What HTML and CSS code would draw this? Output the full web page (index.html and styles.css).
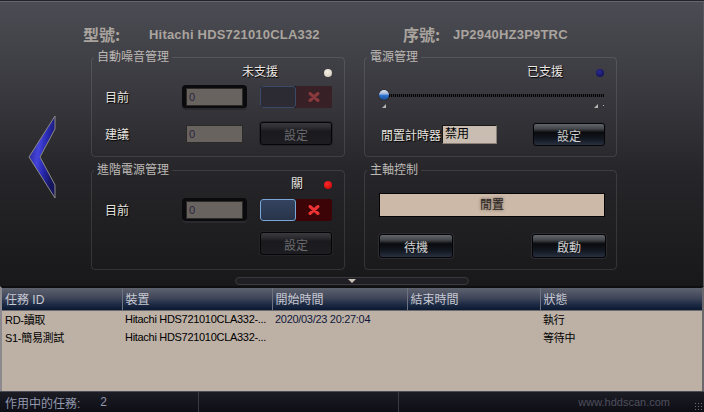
FILE: index.html
```html
<!DOCTYPE html>
<html lang="zh-Hant">
<head>
    <meta charset="UTF-8">
    <title>HDDScan</title>
    <link rel="stylesheet" href="styles.css">
</head>
<body>
    <div class="panel">
        <div class="info">
            <span class="info-label">型號:</span>
            <span class="info-value">Hitachi HDS721010CLA332</span>
            <span class="info-label serial">序號:</span>
            <span class="info-value">JP2940HZ3P9TRC</span>
        </div>

        <div class="panel-body">
            <div class="nav">
                <svg width="30" height="84" viewBox="-1 -1 30 84">
                    <defs>
                        <linearGradient id="chev" x1="0" y1="0" x2="1" y2="0.4">
                            <stop offset="0" stop-color="#1c1c7a"/>
                            <stop offset="0.45" stop-color="#4444dc"/>
                            <stop offset="0.7" stop-color="#2828b0"/>
                            <stop offset="1" stop-color="#16165e"/>
                        </linearGradient>
                    </defs>
                    <polygon points="27,0 1,41 27,82 27,69 12,41 27,13" fill="url(#chev)" stroke="#8c8a86" stroke-width="1"/>
                </svg>
            </div>

            <div class="groups">
                <!-- 自動噪音管理 -->
                <fieldset class="group">
                    <legend>自動噪音管理</legend>
                    <div class="status">
                        <span class="state aam">未支援</span>
                        <span class="dot dot-beige"></span>
                    </div>
                    <div class="row first">
                        <span class="row-label">目前</span>
                        <div class="field"><div class="field-input">0</div></div>
                        <div class="toggle">
                            <div class="toggle-off"></div>
                            <div class="toggle-x">
                                <svg width="12" height="10" viewBox="0 0 12 10"><path d="M2 1.5 L10 8.5 M10 1.5 L2 8.5" stroke="#8a3a3c" stroke-width="3" stroke-linecap="round"/></svg>
                            </div>
                        </div>
                    </div>
                    <div class="row second">
                        <span class="row-label">建議</span>
                        <div class="field plain"><div class="field-input">0</div></div>
                        <button class="btn btn-disabled toggle-gap">設定</button>
                    </div>
                </fieldset>

                <!-- 電源管理 -->
                <fieldset class="group">
                    <legend>電源管理</legend>
                    <div class="status">
                        <span class="state power">已支援</span>
                        <span class="dot dot-navy"></span>
                    </div>
                    <div class="slider">
                        <div class="slider-track"></div>
                        <div class="slider-thumb"></div>
                    </div>
                    <div class="ticks">
                        <span class="tick"></span>
                        <span class="tick-end"><span class="tick"></span><span class="tick-dot"></span></span>
                    </div>
                    <div class="timer-row">
                        <span class="timer-label">閒置計時器</span>
                        <div class="timer-input">禁用</div>
                        <button class="btn timer-btn">設定</button>
                    </div>
                </fieldset>

                <!-- 進階電源管理 -->
                <fieldset class="group">
                    <legend>進階電源管理</legend>
                    <div class="status apm-status">
                        <span class="state apm">關</span>
                        <span class="dot dot-red"></span>
                    </div>
                    <div class="row apm-row">
                        <span class="row-label">目前</span>
                        <div class="field"><div class="field-input">0</div></div>
                        <div class="toggle active">
                            <div class="toggle-off"></div>
                            <div class="toggle-x">
                                <svg width="12" height="10" viewBox="0 0 12 10"><path d="M2 1.5 L10 8.5 M10 1.5 L2 8.5" stroke="#ec3434" stroke-width="3" stroke-linecap="round"/></svg>
                            </div>
                        </div>
                    </div>
                    <div class="apm-set">
                        <button class="btn btn-disabled">設定</button>
                    </div>
                </fieldset>

                <!-- 主軸控制 -->
                <fieldset class="group">
                    <legend>主軸控制</legend>
                    <div class="spindle-state">閒置</div>
                    <div class="spindle-buttons">
                        <button class="btn wide">待機</button>
                        <button class="btn wide">啟動</button>
                    </div>
                </fieldset>
            </div>
        </div>

        <div class="collapse">
            <div class="collapse-bar"><span class="collapse-arrow"></span></div>
        </div>
    </div>

    <div class="tasks">
        <table>
            <colgroup>
                <col class="c-id"><col class="c-dev"><col class="c-start"><col class="c-end"><col>
            </colgroup>
            <thead>
                <tr><th>任務 ID</th><th>裝置</th><th>開始時間</th><th>結束時間</th><th>狀態</th></tr>
            </thead>
            <tbody>
                <tr><td>RD-讀取</td><td>Hitachi HDS721010CLA332-...</td><td class="time">2020/03/23 20:27:04</td><td></td><td>執行</td></tr>
                <tr><td>S1-簡易測試</td><td>Hitachi HDS721010CLA332-...</td><td></td><td></td><td>等待中</td></tr>
            </tbody>
        </table>
    </div>

    <div class="statusbar">
        <div class="sb-cell sb-count"><span>作用中的任務:</span><span class="sb-num">2</span></div>
        <div class="sb-cell sb-mid"></div>
        <div class="sb-url">www.hddscan.com</div>
        <div class="grip"></div>
    </div>
</body>
</html>
```

FILE: styles.css
```css
* {
    box-sizing: border-box;
}
body {
    margin: 0;
    width: 704px;
    height: 412px;
    overflow: hidden;
    background: #151518;
    font-family: "Liberation Sans", "Noto Sans CJK TC", sans-serif;
    font-size: 12px;
}

/* top panel */
.panel {
    height: 286px;
    background: linear-gradient(#4c4c54, #3a3a40 30%, #26262a 60%, #18181a);
    box-shadow: inset 0 1px 0 #232327, inset 0 2px 0 #66666e, inset -1px 0 0 #58585f;
}
.info {
    height: 49px;
    display: flex;
    align-items: center;
    padding: 19px 0 0 83px;
    color: #aaa49e;
}
.info-label {
    width: 66px;
    font-family: "Noto Sans CJK TC", sans-serif;
    font-size: 16px;
    font-weight: bold;
    line-height: 18px;
}
.info-label.serial {
    width: 50px;
}
.info-value {
    width: 254px;
    font-size: 13px;
    font-weight: bold;
    letter-spacing: 0.2px;
}
.info-value:last-child {
    width: auto;
}

.panel-body {
    display: flex;
    height: 221px;
}
.nav {
    width: 91px;
    padding: 66px 0 0 27px;
}
.groups {
    display: grid;
    grid-template-columns: 254px 253px;
    grid-template-rows: 108px 108px;
    column-gap: 19px;
    row-gap: 5px;
}
.group {
    margin: 0;
    padding: 0;
    min-width: 0;
    border: 1px solid rgba(255, 255, 255, 0.11);
    border-radius: 4px;
}
.group legend {
    margin-left: 2px;
    padding: 0 3px;
    font-size: 12px;
    line-height: 16px;
    color: #bcb8b4;
}

/* status line with led */
.status {
    display: flex;
    justify-content: flex-end;
    align-items: center;
    height: 15px;
    padding-right: 12px;
    color: #ebe7e3;
    text-shadow: 1px 1px 1px #000;
    line-height: 15px;
}
.state.aam { margin-right: 46px; }
.state.apm { margin-right: 21px; }
.state.power { margin-right: 33px; }
.dot {
    width: 8px;
    height: 8px;
    border-radius: 50%;
}
.dot-beige { background: radial-gradient(circle at 40% 35%, #f4eee4, #cfc6b6); }
.dot-navy { background: radial-gradient(circle at 40% 35%, #2a2a90, #0c0c48); }
.dot-red { background: radial-gradient(circle at 40% 35%, #ff2a2a, #c00000); }

/* label / field rows */
.row {
    display: flex;
    align-items: center;
    height: 23px;
    padding-left: 13px;
}
.row.first { margin-top: 5px; }
.row.second { margin-top: 14px; }
.row.apm-row { margin-top: 7px; }
.apm-status { height: 13px; }
.row-label {
    width: 77px;
    color: #e6e2de;
    text-shadow: 1px 1px 1px #000;
}
.field {
    width: 65px;
    height: 23px;
    padding: 3px 4px 2px;
    border-radius: 4px;
    background: #0b0b0d;
    box-shadow: 0 2px 0 #2a2a2e;
}
.field.plain {
    background: transparent;
    box-shadow: none;
}
.field-input {
    height: 18px;
    padding-left: 2px;
    background: #69635f;
    border: 1px solid #2c2a28;
    color: #26263e;
    font-size: 11px;
    line-height: 16px;
}

.toggle {
    display: flex;
    width: 72px;
    height: 22px;
    margin-left: 13px;
    border-radius: 3px;
    overflow: hidden;
    background: #1a181c;
}
.toggle-off {
    width: 36px;
    border: 1px solid #3a4a66;
    border-radius: 3px;
    background: #2c2a32;
}
.toggle-x {
    flex: 1;
    display: flex;
    align-items: center;
    justify-content: center;
    background: #382126;
}
.toggle.active .toggle-off {
    border-color: #78a6d6;
    background: linear-gradient(#344360, #28344a);
}
.toggle.active .toggle-x {
    background: #3c0406;
}

/* glossy buttons */
.btn {
    width: 72px;
    height: 23px;
    padding: 0;
    border: 1px solid #050506;
    border-radius: 3px;
    background: linear-gradient(#62666a 0%, #44484c 22%, #0a0b0e 40%, #121720 70%, #283040 100%);
    box-shadow: 0 0 0 1px #2c2c32;
    color: #d0d0d0;
    font-family: "Noto Sans CJK TC", sans-serif;
    font-size: 12px;
    line-height: 20px;
    padding-top: 2px;
}
.btn-disabled {
    background: linear-gradient(#3a3a3e 0%, #2c2c30 22%, #1a1a1e 40%, #1e1e22 100%);
    color: #6c6c70;
    box-shadow: 0 0 0 1px #242428;
}
.toggle-gap {
    margin-left: 13px;
}
.apm-set {
    margin: 11px 0 0 168px;
}

/* power slider */
.slider {
    position: relative;
    height: 14px;
    margin: 8px 12px 0 14px;
}
.slider-track {
    position: absolute;
    left: 0;
    right: 0;
    top: 6px;
    height: 3px;
    background: repeating-linear-gradient(90deg, #050505 0 1px, #2e2e30 1px 2px);
}
.slider-thumb {
    position: absolute;
    left: 0;
    top: 2px;
    width: 10px;
    height: 10px;
    border-radius: 50%;
    background: linear-gradient(#e4e8f0 0%, #9ab4d8 40%, #2a74d0 55%, #1a4a90 100%);
    box-shadow: 0 0 1px #000;
}
.ticks {
    display: flex;
    justify-content: space-between;
    height: 6px;
    margin: 2px 12px 0 17px;
}
.tick {
    display: block;
    width: 0;
    height: 0;
    border-left: 4px solid transparent;
    border-bottom: 4px solid #b8b4b0;
}
.tick-end {
    display: flex;
    gap: 5px;
}
.tick-dot {
    width: 1px;
    height: 1px;
    margin-top: 1px;
    background: #b8b4b0;
}
.timer-row {
    display: flex;
    align-items: center;
    height: 24px;
    margin-top: 12px;
    padding: 0 11px 0 16px;
}
.timer-label {
    width: 61px;
    color: #e6e2de;
    text-shadow: 1px 1px 1px #000;
}
.timer-input {
    width: 55px;
    height: 19px;
    padding-left: 2px;
    background: #c9bdb2;
    border: 1px solid #1a1816;
    border-right-color: #8a8078;
    border-bottom-color: #8a8078;
    color: #000;
    line-height: 17px;
}
.timer-btn {
    margin-left: auto;
}

/* spindle */
.spindle-state {
    height: 24px;
    margin: 15px 11px 0 14px;
    background: #ccb9a8;
    border: 1px solid #050505;
    text-align: center;
    line-height: 22px;
    color: #2c2624;
    text-shadow: 0 0 3px #4a4038;
}
.spindle-buttons {
    display: flex;
    justify-content: space-between;
    margin-top: 17px;
    padding: 0 10px 0 14px;
}
.btn.wide {
    width: 74px;
    height: 24px;
}

/* collapse handle */
.collapse {
    height: 16px;
    padding-top: 7px;
}
.collapse-bar {
    display: flex;
    justify-content: center;
    align-items: center;
    width: 234px;
    height: 8px;
    margin-left: 235px;
    border: 1px solid #38383e;
    border-radius: 4px;
    background: #202024;
}
.collapse-arrow {
    width: 0;
    height: 0;
    border-left: 4px solid transparent;
    border-right: 4px solid transparent;
    border-top: 4px solid #cac2ba;
}

/* task list */
.tasks {
    height: 105px;
    border-top: 2px solid #0e0e10;
    border-left: 2px solid #8c8a8e;
    border-right: 2px solid #6a686c;
    background: #bdb1a6;
}
table {
    width: 100%;
    border-collapse: collapse;
    table-layout: fixed;
}
.c-id { width: 120px; }
.c-dev { width: 150px; }
.c-start { width: 135px; }
.c-end { width: 133px; }
th {
    height: 22px;
    padding: 0 3px;
    background: linear-gradient(#5e626e, #40465a 45%, #1c2a44 75%, #0a1830);
    border-right: 1px solid #6c7282;
    border-bottom: 1px solid #6a6a70;
    color: #c6c8d2;
    font-weight: normal;
    font-size: 12px;
    text-align: left;
}
th:last-child {
    border-right: none;
}
td {
    height: 18px;
    padding: 0 3px;
    color: #000;
    font-size: 11px;
    letter-spacing: -0.3px;
    white-space: nowrap;
    overflow: hidden;
}
td.time {
    color: #10183a;
}

/* status bar */
.statusbar {
    display: flex;
    align-items: center;
    height: 21px;
    border-top: 1px solid #4c4c54;
    background: linear-gradient(#1c1c24, #0e0e16);
    color: #9298ae;
}
.sb-cell {
    height: 100%;
    display: flex;
    align-items: center;
    border-right: 1px solid #3a3a44;
}
.sb-count {
    width: 199px;
    padding-left: 5px;
}
.sb-num {
    margin-left: 20px;
}
.sb-mid {
    width: 200px;
}
.sb-url {
    margin-left: auto;
    margin-right: 24px;
    font-size: 11px;
    color: #4e4e5c;
}
.grip {
    align-self: flex-end;
    width: 10px;
    height: 10px;
    background-image: radial-gradient(circle, #6a6a74 0.8px, transparent 1px);
    background-size: 3px 3px;
}
```
